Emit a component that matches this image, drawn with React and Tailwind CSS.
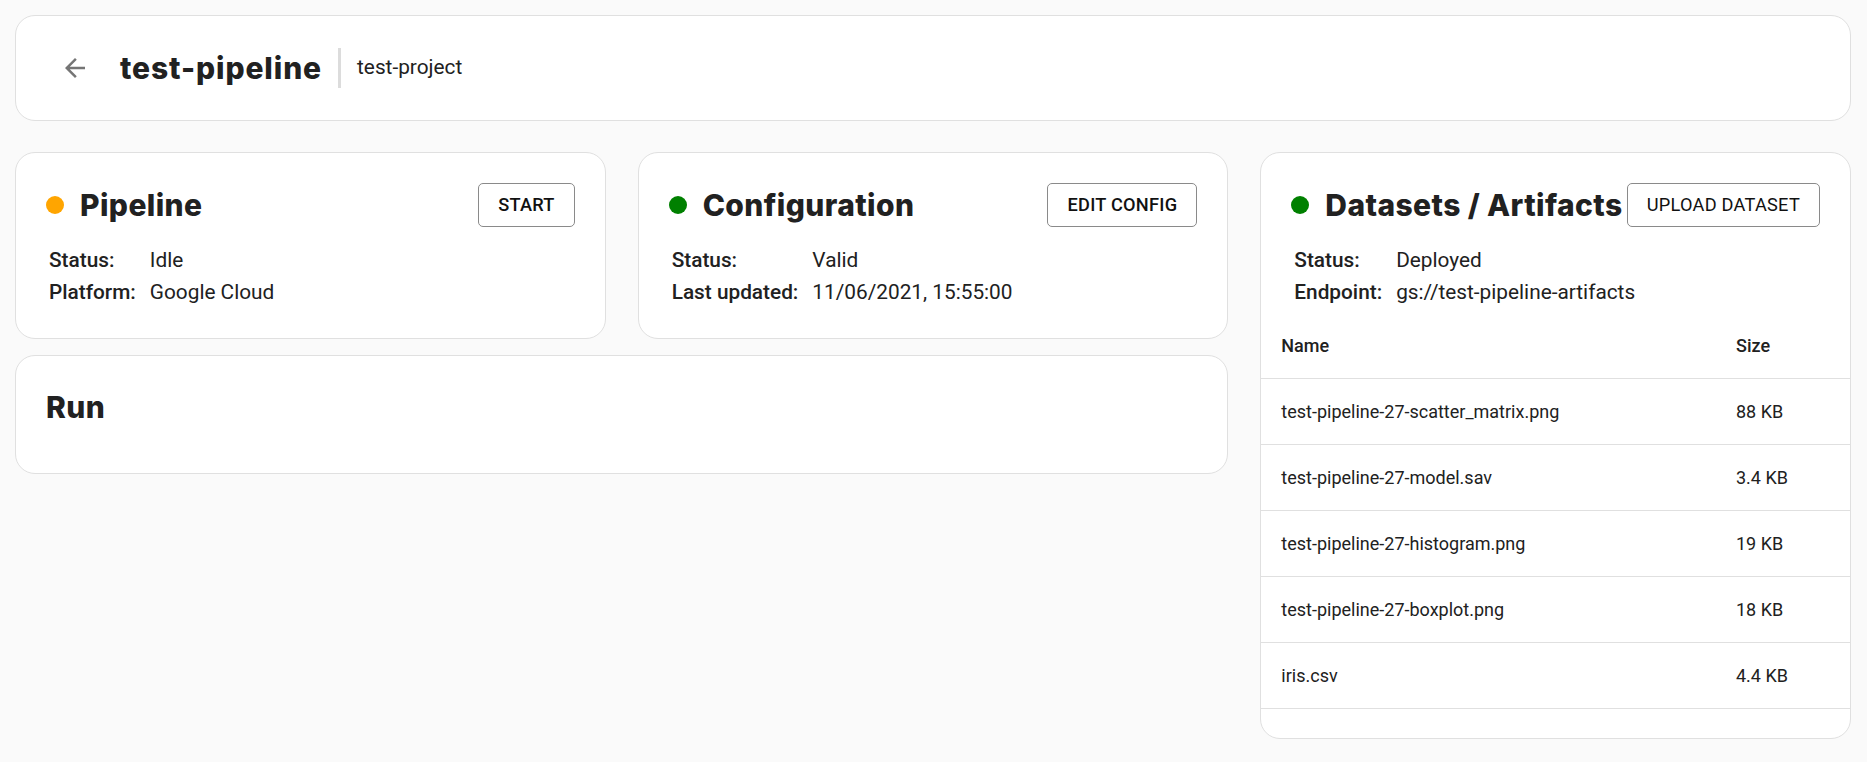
import React from "react";

const files = [
  ["test-pipeline-27-scatter_matrix.png", "88 KB"],
  ["test-pipeline-27-model.sav", "3.4 KB"],
  ["test-pipeline-27-histogram.png", "19 KB"],
  ["test-pipeline-27-boxplot.png", "18 KB"],
  ["iris.csv", "4.4 KB"],
];

const headFont = { fontFamily: "Inter, 'Noto Sans', sans-serif" };

function Dot({ color }) {
  return <span className={`inline-block w-[18px] h-[18px] rounded-full shrink-0 ${color}`} />;
}

function CardHeader({ dotColor, title, button, buttonWeight }) {
  return (
    <div className="flex items-center justify-between h-[44px]">
      <div className="flex items-center gap-[16px] min-w-0">
        <Dot color={dotColor} />
        <h2
          className="text-[30px] font-extrabold text-[#212121] whitespace-nowrap tracking-[0.4px] leading-[40px]"
          style={headFont}
        >
          {title}
        </h2>
      </div>
      <button
        className={`shrink-0 h-[44px] px-[19px] border border-[#8a8a8a] rounded-[5px] bg-white text-[18.2px] uppercase tracking-[0.25px] text-[#111] ${buttonWeight}`}
      >
        {button}
      </button>
    </div>
  );
}

function Info({ rows }) {
  return (
    <div className="mt-[17px] pl-[3px] grid grid-cols-[auto_1fr] gap-x-[14px] text-[20.8px] leading-[32px] text-[#212121]">
      {rows.map(([k, v]) => (
        <React.Fragment key={k}>
          <div className="font-medium">{k}</div>
          <div>{v}</div>
        </React.Fragment>
      ))}
    </div>
  );
}

export default function App() {
  return (
    <div
      className="min-h-screen bg-[#fafafa] pl-[15px] pr-[16px] pt-[15px] pb-[20px] text-[#212121]"
      style={{ fontFamily: "Roboto, 'Liberation Sans', sans-serif" }}
    >
      <div className="h-[106px] bg-white border border-[#e0e0e0] rounded-[20px] flex items-center pl-[44px]">
        <svg width="30" height="30" viewBox="0 0 24 24" fill="#757575">
          <path d="M20 11H7.83l5.59-5.59L12 4l-8 8 8 8 1.41-1.41L7.83 13H20v-2z" />
        </svg>
        <h1
          className="ml-[30px] text-[30px] font-extrabold leading-[40px] tracking-[0.9px] text-[#212121]"
          style={headFont}
        >
          test-pipeline
        </h1>
        <div className="mx-[16px] w-[3px] h-[40px] bg-[#dcdcdc]" />
        <span className="text-[20.8px] text-[#212121]">test-project</span>
      </div>

      <div className="mt-[31px] grid grid-cols-3 gap-x-[32px] items-start">
        <div className="col-span-2 flex flex-col gap-[16px]">
          <div className="grid grid-cols-2 gap-x-[32px]">
            <div className="bg-white border border-[#e0e0e0] rounded-[20px] p-[30px]">
              <CardHeader dotColor="bg-[#ffa500]" title="Pipeline" button="Start" buttonWeight="font-medium" />
              <Info rows={[["Status:", "Idle"], ["Platform:", "Google Cloud"]]} />
            </div>

            <div className="bg-white border border-[#e0e0e0] rounded-[20px] p-[30px]">
              <CardHeader dotColor="bg-[#008000]" title="Configuration" button="Edit config" buttonWeight="font-medium" />
              <Info rows={[["Status:", "Valid"], ["Last updated:", "11/06/2021, 15:55:00"]]} />
            </div>
          </div>

          <div className="bg-white border border-[#e0e0e0] rounded-[20px] px-[30px] pt-[30px] pb-[45px]">
            <h2 className="text-[30px] font-extrabold leading-[42px] tracking-[0.4px] text-[#212121]" style={headFont}>
              Run
            </h2>
          </div>
        </div>

        <div className="bg-white border border-[#e0e0e0] rounded-[20px] pb-[29px]">
          <div className="px-[30px] pt-[30px]">
            <CardHeader dotColor="bg-[#008000]" title="Datasets / Artifacts" button="Upload dataset" buttonWeight="font-normal" />
            <Info rows={[["Status:", "Deployed"], ["Endpoint:", "gs://test-pipeline-artifacts"]]} />
          </div>
          <div className="mt-[5px] text-[18px] text-[#212121]">
            <div className="flex items-center h-[66px] border-b border-[#e0e0e0] font-medium">
              <div className="flex-1 pl-[20px]">Name</div>
              <div className="w-[114px]">Size</div>
            </div>
            {files.map(([n, s]) => (
              <div key={n} className="flex items-center h-[66px] border-b border-[#e0e0e0]">
                <div className="flex-1 pl-[20px]">{n}</div>
                <div className="w-[114px]">{s}</div>
              </div>
            ))}
          </div>
        </div>
      </div>
    </div>
  );
}
